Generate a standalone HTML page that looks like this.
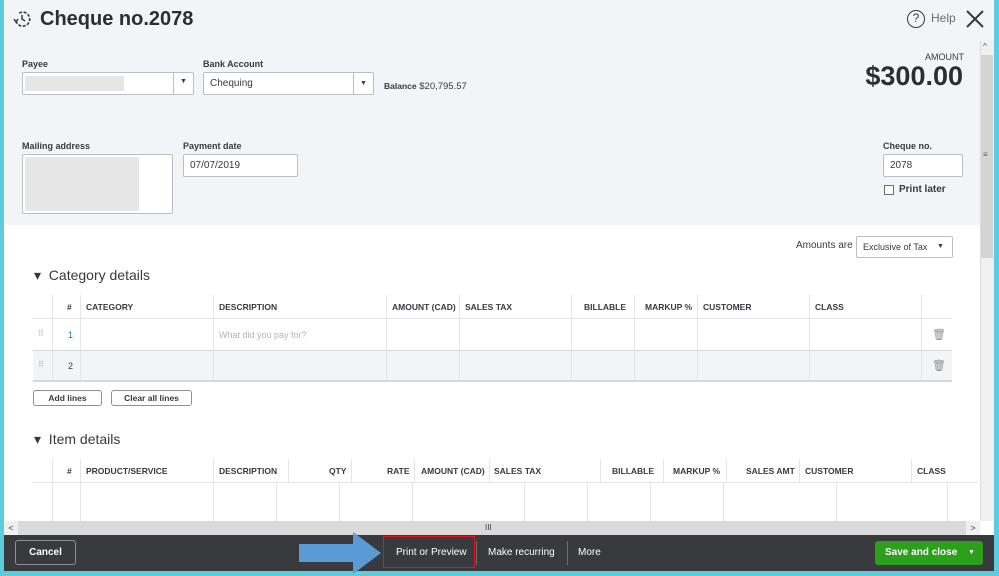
<!DOCTYPE html><html><head><style>
*{box-sizing:border-box;margin:0;padding:0}
body{width:999px;height:576px;overflow:hidden;background:#5ccbdb;font-family:"Liberation Sans",sans-serif;color:#393a3d;position:relative}
.a{position:absolute}
.lbl{font-size:9px;font-weight:bold;color:#393a3d}
.inp{background:#fff;border:1px solid #babec5;border-radius:2px;font-size:10px;padding-left:6px}
.th{font-size:8.5px;font-weight:bold;color:#393a3d;top:302px}
.vl{width:1px;background:#e3e5e8}
.hl{height:1px;background:#d4d7dc}
.btn{border:1px solid #8d9096;border-radius:3px;background:#fff;font-size:8.5px;font-weight:bold;text-align:center;line-height:14px}
</style></head><body>
<div class="a" style="left:4px;top:0;width:990px;height:571px;background:#fff"></div>
<div class="a" style="left:4px;top:0;width:990px;height:225px;background:#f3f4f8"></div>
<svg class="a" style="left:12px;top:9px" width="20" height="20" viewBox="0 0 20 20"><path d="M4 12 A7 7 0 1 0 6 5" fill="none" stroke="#393a3d" stroke-width="1.6" stroke-dasharray="3 1.5"/><path d="M2 10 L4 13 L6 10" fill="none" stroke="#393a3d" stroke-width="1.5"/><path d="M10 6 V10 L13 12" fill="none" stroke="#393a3d" stroke-width="1.5"/></svg>
<div class="a" style="left:40px;top:8px;font-size:20px;font-weight:bold;color:#2d2e31">Cheque no.2078</div>
<div class="a" style="left:907px;top:10px;width:18px;height:18px;border:1.5px solid #393a3d;border-radius:50%;font-size:12px;text-align:center;line-height:15px">?</div>
<div class="a" style="left:931px;top:11px;font-size:12px;color:#6b6c72">Help</div>
<svg class="a" style="left:965px;top:9px" width="20" height="20"><path d="M2 2L18 18M18 2L2 18" stroke="#393a3d" stroke-width="2"/></svg>
<div class="a lbl" style="left:22px;top:59px">Payee</div>
<div class="a inp" style="left:22px;top:72px;width:172px;height:23px"><div class="a" style="left:2px;top:3px;width:99px;height:15px;background:#e6e6e6"></div><div class="a" style="left:150px;top:0;width:1px;height:21px;background:#babec5"></div><div class="a" style="left:157px;top:5px;font-size:7px">▼</div></div>
<div class="a lbl" style="left:203px;top:59px">Bank Account</div>
<div class="a inp" style="left:203px;top:72px;width:171px;height:23px;line-height:21px">Chequing<div class="a" style="left:149px;top:0;width:1px;height:21px;background:#babec5"></div><div class="a" style="left:156px;top:0;font-size:7px">▼</div></div>
<div class="a" style="left:384px;top:81px;font-size:9.5px"><b style="font-size:8.5px">Balance</b> $20,795.57</div>
<div class="a" style="left:925px;top:52px;font-size:9px;color:#393a3d">AMOUNT</div>
<div class="a" style="left:848px;top:61px;font-size:27px;font-weight:bold;width:115px;text-align:right;color:#2d2e31">$300.00</div>
<div class="a lbl" style="left:22px;top:141px">Mailing address</div>
<div class="a inp" style="left:22px;top:154px;width:151px;height:60px"><div class="a" style="left:2px;top:2px;width:114px;height:54px;background:#e6e6e6"></div></div>
<div class="a lbl" style="left:183px;top:141px">Payment date</div>
<div class="a inp" style="left:183px;top:154px;width:115px;height:23px;line-height:21px">07/07/2019</div>
<div class="a lbl" style="left:883px;top:141px">Cheque no.</div>
<div class="a inp" style="left:883px;top:154px;width:80px;height:23px;line-height:21px">2078</div>
<div class="a" style="left:884px;top:185px;width:10px;height:10px;border:1px solid #6b6c72;background:#fff"></div>
<div class="a" style="left:899px;top:184px;font-size:10px;font-weight:bold">Print later</div>
<div class="a" style="left:796px;top:240px;font-size:10px">Amounts are</div>
<div class="a inp" style="left:856px;top:236px;width:97px;height:22px;line-height:20px;font-size:9px">Exclusive of Tax<span class="a" style="left:80px;font-size:7px">▼</span></div>
<div class="a" style="left:34px;top:267px;font-size:14px">▾&nbsp; Category details</div>
<div class="a" style="left:33px;top:318px;width:919px;height:1px;background:#e3e5e8"></div>
<div class="a" style="left:33px;top:350px;width:919px;height:32px;background:#f3f4f8;border-top:1px solid #d4d7dc;border-bottom:2px solid #d4d7dc"></div>
<div class="a vl" style="left:52px;top:295px;height:86px"></div><div class="a vl" style="left:80px;top:295px;height:86px"></div><div class="a vl" style="left:213px;top:295px;height:86px"></div><div class="a vl" style="left:386px;top:295px;height:86px"></div><div class="a vl" style="left:459px;top:295px;height:86px"></div><div class="a vl" style="left:571px;top:295px;height:86px"></div><div class="a vl" style="left:634px;top:295px;height:86px"></div><div class="a vl" style="left:697px;top:295px;height:86px"></div><div class="a vl" style="left:809px;top:295px;height:86px"></div><div class="a vl" style="left:921px;top:295px;height:86px"></div>
<div class="a th" style="left:67px">#</div><div class="a th" style="left:86px">CATEGORY</div><div class="a th" style="left:219px">DESCRIPTION</div><div class="a th" style="left:392px">AMOUNT (CAD)</div><div class="a th" style="left:465px">SALES TAX</div><div class="a th" style="left:584px">BILLABLE</div><div class="a th" style="left:645px">MARKUP %</div><div class="a th" style="left:703px">CUSTOMER</div><div class="a th" style="left:815px">CLASS</div>
<div class="a" style="left:38px;top:329px;font-size:8px;color:#aaa">⠿</div><div class="a" style="left:38px;top:360px;font-size:8px;color:#aaa">⠿</div>
<div class="a" style="left:68px;top:330px;font-size:9px;color:#0077c5">1</div><div class="a" style="left:68px;top:361px;font-size:9px">2</div>
<div class="a" style="left:219px;top:330px;font-size:9px;color:#b0b3b8">What did you pay for?</div>
<div class="a" style="left:932px;top:328px;font-size:11px;color:#8d9096">🗑</div><div class="a" style="left:932px;top:359px;font-size:11px;color:#8d9096">🗑</div>
<div class="a btn" style="left:33px;top:390px;width:69px;height:16px">Add lines</div>
<div class="a btn" style="left:111px;top:390px;width:81px;height:16px">Clear all lines</div>
<div class="a" style="left:34px;top:431px;font-size:14px">▾&nbsp; Item details</div>
<div class="a hl" style="left:33px;top:482px;width:945px;background:#e3e5e8"></div>
<div class="a vl" style="left:52px;top:459px;height:62px"></div><div class="a vl" style="left:80px;top:459px;height:62px"></div><div class="a vl" style="left:213px;top:459px;height:62px"></div><div class="a vl" style="left:288px;top:459px;height:23px"></div><div class="a vl" style="left:276px;top:482px;height:39px"></div><div class="a vl" style="left:351px;top:459px;height:23px"></div><div class="a vl" style="left:339px;top:482px;height:39px"></div><div class="a vl" style="left:414px;top:459px;height:23px"></div><div class="a vl" style="left:412px;top:482px;height:39px"></div><div class="a vl" style="left:489px;top:459px;height:23px"></div><div class="a vl" style="left:524px;top:482px;height:39px"></div><div class="a vl" style="left:600px;top:459px;height:23px"></div><div class="a vl" style="left:587px;top:482px;height:39px"></div><div class="a vl" style="left:663px;top:459px;height:23px"></div><div class="a vl" style="left:650px;top:482px;height:39px"></div><div class="a vl" style="left:726px;top:459px;height:23px"></div><div class="a vl" style="left:723px;top:482px;height:39px"></div><div class="a vl" style="left:799px;top:459px;height:23px"></div><div class="a vl" style="left:836px;top:482px;height:39px"></div><div class="a vl" style="left:911px;top:459px;height:23px"></div><div class="a vl" style="left:947px;top:482px;height:39px"></div>
<div class="a th" style="left:67px;top:466px">#</div><div class="a th" style="left:86px;top:466px">PRODUCT/SERVICE</div><div class="a th" style="left:219px;top:466px">DESCRIPTION</div><div class="a th" style="left:329px;top:466px">QTY</div><div class="a th" style="left:387px;top:466px">RATE</div><div class="a th" style="left:421px;top:466px">AMOUNT (CAD)</div><div class="a th" style="left:494px;top:466px">SALES TAX</div><div class="a th" style="left:612px;top:466px">BILLABLE</div><div class="a th" style="left:673px;top:466px">MARKUP %</div><div class="a th" style="left:746px;top:466px">SALES AMT</div><div class="a th" style="left:805px;top:466px">CUSTOMER</div><div class="a th" style="left:917px;top:466px">CLASS</div>
<div class="a" style="left:980px;top:41px;width:14px;height:480px;background:#f0f0f0;border-left:1px solid #ddd"></div>
<div class="a" style="left:981px;top:55px;width:12px;height:203px;background:#d4d4d4"></div>
<div class="a" style="left:983px;top:42px;font-size:8px;color:#555">^</div>
<div class="a" style="left:983px;top:150px;font-size:8px;color:#555">≡</div>
<div class="a" style="left:4px;top:521px;width:976px;height:14px;background:#dadada"></div>
<div class="a" style="left:4px;top:521px;width:14px;height:14px;background:#f0f0f0;font-size:9px;text-align:center;line-height:14px">&lt;</div>
<div class="a" style="left:966px;top:521px;width:14px;height:14px;background:#f0f0f0;font-size:9px;text-align:center;line-height:14px">&gt;</div>
<div class="a" style="left:485px;top:523px;font-size:8px">III</div>
<div class="a" style="left:4px;top:535px;width:990px;height:36px;background:#393a3d"></div>
<div class="a" style="left:15px;top:540px;width:61px;height:25px;border:1px solid #8d9096;border-radius:3px;color:#fff;font-size:10px;font-weight:bold;text-align:center;line-height:23px">Cancel</div>
<svg class="a" style="left:299px;top:532px" width="84" height="42"><polygon points="0,12 54,12 54,0 82,21 54,42 54,30 0,30" fill="#5b9bd5"/></svg>
<div class="a" style="left:383px;top:536px;width:92px;height:32px;border:1.5px solid #e0141e"></div>
<div class="a" style="left:396px;top:547px;font-size:10px;color:#fff">Print or Preview</div>
<div class="a" style="left:476px;top:541px;width:1px;height:24px;background:#6b6c72"></div>
<div class="a" style="left:488px;top:547px;font-size:10px;color:#fff">Make recurring</div>
<div class="a" style="left:567px;top:541px;width:1px;height:24px;background:#6b6c72"></div>
<div class="a" style="left:578px;top:547px;font-size:10px;color:#fff">More</div>
<div class="a" style="left:875px;top:541px;width:108px;height:24px;background:#2ca01c;border-radius:3px;color:#fff;font-size:10px;font-weight:bold;line-height:24px;padding-left:10px">Save and close<span class="a" style="left:93px;font-size:7px">▼</span></div>
</body></html>
